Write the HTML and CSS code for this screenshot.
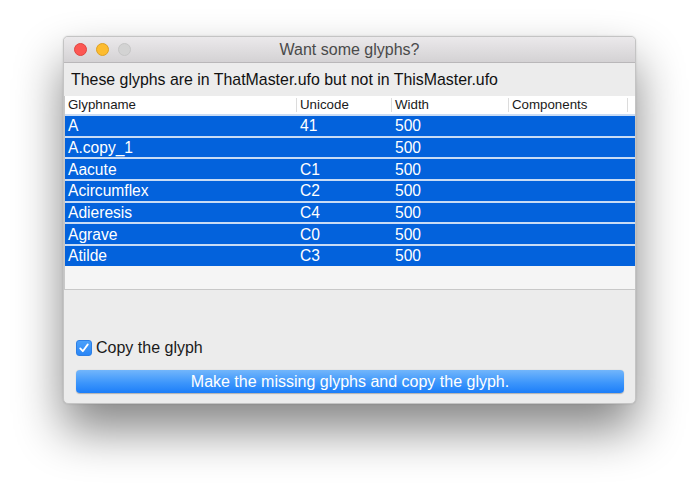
FILE: index.html
```html
<!DOCTYPE html>
<html>
<head>
<meta charset="utf-8">
<title>Want some glyphs?</title>
<link rel="stylesheet" href="styles.css">
</head>
<body>
<div class="window">
  <div class="titlebar">
    <div class="lights">
      <span class="light red"></span>
      <span class="light yellow"></span>
      <span class="light gray"></span>
    </div>
    <div class="title">Want some glyphs?</div>
  </div>
  <div class="message">These glyphs are in ThatMaster.ufo but not in ThisMaster.ufo</div>
  <div class="table">
    <div class="header">
      <div class="cell c1">Glyphname</div>
      <div class="cell c2">Unicode</div>
      <div class="cell c3">Width</div>
      <div class="cell c4">Components</div>
      <div class="cell c5"></div>
    </div>
    <div class="row"><div class="cell c1">A</div><div class="cell c2">41</div><div class="cell c3">500</div><div class="cell c4"></div></div>
    <div class="row"><div class="cell c1">A.copy_1</div><div class="cell c2"></div><div class="cell c3">500</div><div class="cell c4"></div></div>
    <div class="row"><div class="cell c1">Aacute</div><div class="cell c2">C1</div><div class="cell c3">500</div><div class="cell c4"></div></div>
    <div class="row"><div class="cell c1">Acircumflex</div><div class="cell c2">C2</div><div class="cell c3">500</div><div class="cell c4"></div></div>
    <div class="row"><div class="cell c1">Adieresis</div><div class="cell c2">C4</div><div class="cell c3">500</div><div class="cell c4"></div></div>
    <div class="row"><div class="cell c1">Agrave</div><div class="cell c2">C0</div><div class="cell c3">500</div><div class="cell c4"></div></div>
    <div class="row"><div class="cell c1">Atilde</div><div class="cell c2">C3</div><div class="cell c3">500</div><div class="cell c4"></div></div>
  </div>
  <label class="check">
    <span class="box"><svg width="12" height="12" viewBox="0 0 12 12"><path d="M2.2 6.4 L4.8 9.2 L9.8 2.4" fill="none" stroke="#fff" stroke-width="1.8" stroke-linecap="round" stroke-linejoin="round"/></svg></span>
    <span class="label">Copy the glyph</span>
  </label>
  <div class="button">Make the missing glyphs and copy the glyph.</div>
</div>
</body>
</html>
```

FILE: styles.css
```css
html, body {
  margin: 0;
  padding: 0;
  background: #ffffff;
}
html { height: 100%; }
body {
  font-family: "Liberation Sans", Arial, sans-serif;
  padding-top: 36px;
  padding-left: 63px;
  min-height: 496px;
  box-sizing: border-box;
  overflow: hidden;
}
.window {
  width: 573px;
  height: 368px;
  box-sizing: border-box;
  border: 1px solid #c4c4c4;
  border-radius: 5px;
  background: #ececec;
  display: flex;
  flex-direction: column;
  box-shadow: 0 26px 48px rgba(0, 0, 0, 0.48), 0 0 2px rgba(0,0,0,0.15);
  overflow: hidden;
}
.titlebar {
  height: 25px;
  flex: none;
  background: linear-gradient(#ebe9eb, #d4d2d4);
  border-bottom: 1px solid #b9b7b9;
  display: flex;
  align-items: center;
  position: relative;
}
.lights {
  display: flex;
  gap: 9px;
  padding-left: 10px;
  position: absolute;
  left: 0;
  top: 6px;
}
.light {
  width: 13px;
  height: 13px;
  border-radius: 50%;
  box-sizing: border-box;
}
.red { background: #fc5753; border: 1px solid #e0443f; }
.yellow { background: #fdbc2f; border: 1px solid #dea123; }
.gray { background: #d3d3d3; border: 1px solid #c6c6c6; }
.title {
  flex: 1;
  text-align: center;
  font-size: 16px;
  color: #4a4a4a;
}
.message {
  height: 33px;
  flex: none;
  box-sizing: border-box;
  padding-left: 7px;
  display: flex;
  align-items: center;
  font-size: 15.9px;
  color: #111;
}
.table {
  height: 194px;
  flex: none;
  box-sizing: border-box;
  background: #f5f5f5;
  border-bottom: 1px solid #c8c8c8;
  border-left: 1px solid #c8c8c8;
}
.header {
  height: 18px;
  background: #ffffff;
  display: flex;
  align-items: center;
  font-size: 13.3px;
  color: #1a1a1a;
}
.header .cell {
  border-right: 1px solid #dcdcdc;
  height: 14px;
  line-height: 14px;
}
.header .c1 { width: 232px; }
.header .c5 { border-right: none; }
.cell {
  box-sizing: border-box;
  padding-left: 3px;
  white-space: nowrap;
  flex: none;
}
.c1 { width: 232px; }
.c2 { width: 95px; }
.c3 { width: 117px; }
.c4 { width: 119px; }
.c5 { flex: 1; }
.row {
  height: 21.667px;
  box-sizing: border-box;
  background: #0362dc;
  border-top: 2px solid #c9dcf5;
  padding-top: 1px;
  display: flex;
  align-items: center;
  font-size: 15.6px;
  color: #ffffff;
}
.row .c1 { padding-left: 3px; }
.check {
  display: flex;
  align-items: center;
  gap: 4px;
  margin-top: 49px;
  margin-left: 12px;
  height: 18px;
}
.box {
  width: 16px;
  height: 16px;
  border-radius: 3px;
  background: linear-gradient(#4aa0fa, #2a86f6);
  display: flex;
  align-items: center;
  justify-content: center;
  box-sizing: border-box;
  border: 1px solid #2c7fe6;
}
.label {
  font-size: 16px;
  color: #1a1a1a;
}
.button {
  margin-top: 13px;
  margin-left: 12px;
  width: 548px;
  height: 23px;
  border-radius: 4px;
  background: linear-gradient(#72b6fb, #3d96fb 55%, #1c7ef9);
  color: #ffffff;
  font-size: 16px;
  display: flex;
  align-items: center;
  justify-content: center;
  box-shadow: 0 0.5px 1px rgba(0,0,0,0.25);
}
```
